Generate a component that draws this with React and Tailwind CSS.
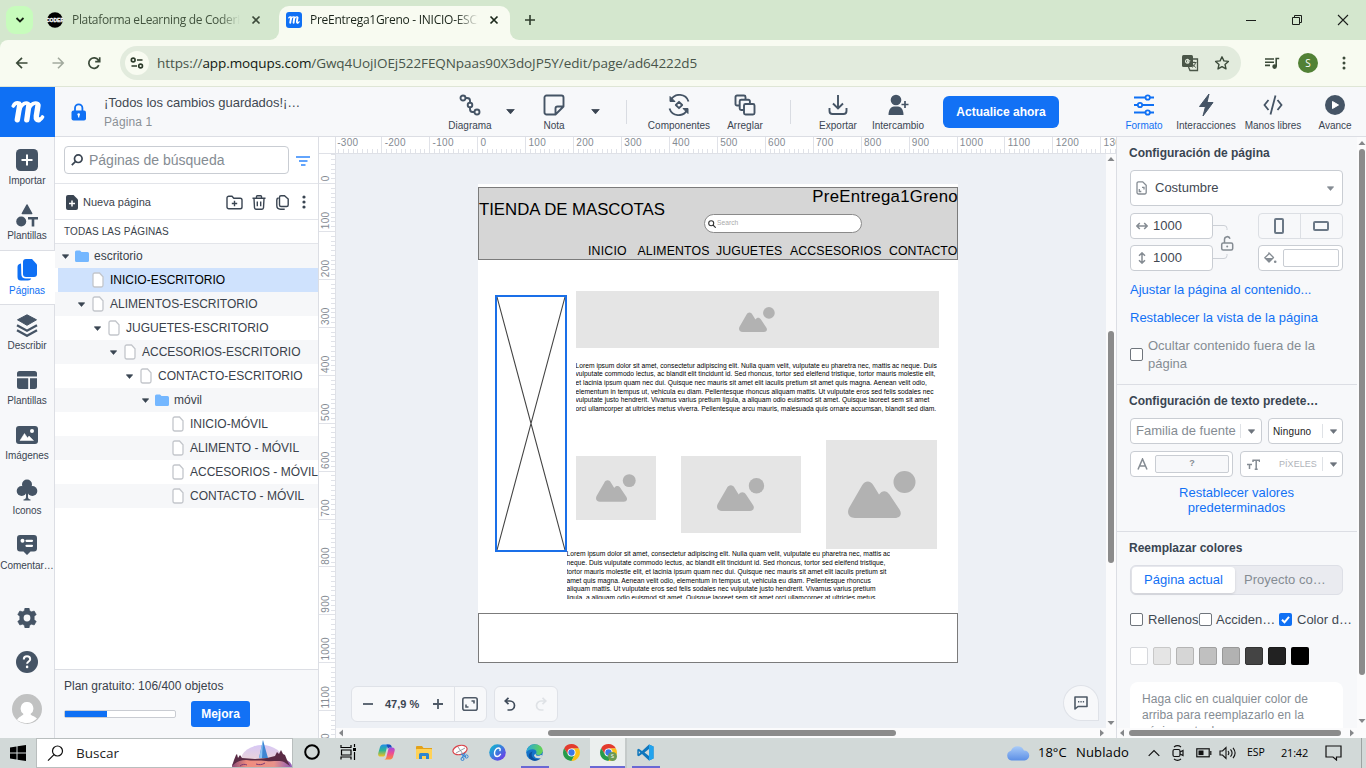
import React from "react";

const INK = "#455465";

function Svg({ w = 24, h = 24, vb, className = "", children, ...rest }) {
  return (
    <svg
      width={w}
      height={h}
      viewBox={vb || `0 0 ${w} ${h}`}
      fill="none"
      className={`block shrink-0 ${className}`}
      {...rest}
    >
      {children}
    </svg>
  );
}

/* ---------- Browser chrome ---------- */

function CloseIcon({ color = "#3c4a3a" }) {
  return (
    <Svg w={10} h={10} stroke={color} strokeWidth="1.7">
      <path d="M1.5 1.5l7 7M8.5 1.5l-7 7" />
    </Svg>
  );
}

function MGlyph({ size, stroke = "#fff" }) {
  return (
    <Svg w={size} h={size} vb="0 0 34 26" stroke={stroke} strokeLinecap="round" strokeLinejoin="round">
      <path strokeWidth="5.400" d="M8.700 6.500L6.300 20.800M17.800 6.500L15.800 20.800M27 6.500L25.300 17C25 20 26 21 27.500 20.800" />
      <path strokeWidth="3.600" d="M2.300 7C3.500 4.500 6 3.500 8.500 4.200M8.500 10.500C11 4.500 15 2.800 17.500 4.800M17.500 10.500C20 4.500 24.300 2.800 27 4.800M27 21C29 21 30.500 20 31.500 18" />
    </Svg>
  );
}

function TabBar() {
  return (
    <div className="flex h-10 shrink-0 bg-[#d4e7ce] font-['Open_Sans','Noto_Sans',sans-serif] text-[12px]">
      <div className="ml-[6px] mt-[6px] flex h-7 w-[27px] items-center justify-center rounded-[9px] bg-[#c7fcbc]">
        <Svg w={10} h={8} stroke="#152213" strokeWidth="1.8">
          <path d="M1.500 2l3.500 3.500L8.500 2" />
        </Svg>
      </div>
      <div className="flex w-[236px] items-center pl-[14px]">
        <Svg w={16} h={16}>
          <circle cx="8" cy="8" r="7.800" fill="#000" />
          <text x="8" y="10" textAnchor="middle" fontSize="5" fontWeight="700" fill="#fff" stroke="#fff" strokeWidth=".3" fontFamily="Liberation Sans">CODER</text>
        </Svg>
        <div className="ml-[9px] w-[168px] overflow-hidden whitespace-nowrap tracking-[-0.330px] text-[#43543f] [mask-image:linear-gradient(to_right,black_148px,transparent_168px)]">
          Plataforma eLearning de CoderHouse
        </div>
        <div className="ml-[11px]"><CloseIcon /></div>
      </div>
      <div className="flex w-[10px] items-end bg-[#f8fbf1]"><div className="h-10 w-[10px] rounded-br-[9px] bg-[#d4e7ce]" /></div>
      <div className="flex bg-[#d4e7ce]">
        <div className="mt-[6px] flex w-[231px] items-center rounded-t-[10px] bg-[#f8fbf1] pb-[6px] pl-[7px]">
          <div className="flex h-4 w-4 items-center justify-center rounded-[3px] bg-[#0f70f4]"><MGlyph size={12} /></div>
          <div className="ml-[8px] w-[168px] overflow-hidden whitespace-nowrap tracking-[-0.270px] text-[#1a241a] [mask-image:linear-gradient(to_right,black_145px,transparent_169px)]">
            PreEntrega1Greno - INICIO-ESCRITORIO
          </div>
          <div className="ml-[11px]"><CloseIcon color="#1c281b" /></div>
        </div>
      </div>
      <div className="w-[10px] bg-[#f8fbf1]"><div className="h-10 w-[10px] rounded-bl-[9px] bg-[#d4e7ce]" /></div>
      <div className="flex flex-1 items-center">
        <Svg w={12} h={12} className="ml-[4px]" stroke="#2f3d2d" strokeWidth="1.6"><path d="M6 1v10M1 6h10" /></Svg>
        <div className="flex-1" />
        <Svg w={12} h={12} className="mr-[34px]" stroke="#1b1f1b" strokeWidth="1"><path d="M1 6.500h10" /></Svg>
        <Svg w={12} h={12} className="mr-[34px]" stroke="#1b1f1b" strokeWidth="1"><path d="M1.500 3.500h7v7h-7zM3.500 3.500v-2h7v7h-2" /></Svg>
        <Svg w={12} h={12} className="mr-[17px]" stroke="#1b1f1b" strokeWidth="1.100"><path d="M1 1l10 10M11 1L1 11" /></Svg>
      </div>
    </div>
  );
}

function AddressBar() {
  return (
    <div className="bg-[#d4e7ce]">
      <div className="flex h-[47px] shrink-0 items-center rounded-tl-[8px] border-b border-[#dfe6d6] bg-[#f8fbf1] font-['Open_Sans','Noto_Sans',sans-serif]">
        <Svg w={14} h={14} className="ml-[15px]" stroke="#3b4a39" strokeWidth="1.700"><path d="M12.500 7H2M7 1.800L1.800 7 7 12.200" /></Svg>
        <Svg w={14} h={14} className="ml-[22px]" stroke="#a2aa9e" strokeWidth="1.600"><path d="M1.500 7H12M7 1.800L12.200 7 7 12.200" /></Svg>
        <Svg w={14} h={14} className="ml-[22px]" stroke="#3b4a39" strokeWidth="1.700"><path d="M11.800 9.200A5.200 5.200 0 1 1 11.400 4.300L12.600 5.500M12.700 1.200v4.500H8.200" /></Svg>
        <div className="ml-[19px] flex h-[34px] w-[1121px] items-center rounded-full bg-[#e2ebdd]">
          <div className="ml-[5px] flex h-6 w-6 items-center justify-center rounded-full bg-[#f8fbf1]">
            <Svg w={14} h={12} stroke="#2b3a29" strokeWidth="1.600"><circle cx="3.200" cy="3" r="1.900" /><path d="M7 3h5.500M1.500 9h5.500" /><circle cx="10.600" cy="9" r="1.900" /></Svg>
          </div>
          <div className="ml-[8px] w-[560px] whitespace-nowrap text-[13.500px] tracking-[-0.080px] text-[#48554a]">
            https://<span className="text-[#111811]">app.moqups.com</span>/Gwq4UojIOEj522FEQNpaas90X3doJP5Y/edit/page/ad64222d5
          </div>
          <div className="flex-1" />
          <Svg w={18} h={18} className="mr-[15px]">
            <rect x="1" y="1" width="11" height="12" rx="1.500" fill="#4a5648" />
            <path d="M9.300 6.700H6.500v1.300h1.500c-.2.800-.8 1.200-1.500 1.200a1.900 1.900 0 1 1 1.200-3.300" stroke="#e2ebdd" strokeWidth="1.100" />
            <path d="M11 5h5.500v11.500H9L7.500 13" stroke="#4a5648" strokeWidth="1.300" />
            <path d="M10.500 8.500h5M13 7.500v1M14.500 8.500c-.4 2.200-1.700 3.800-3.300 4.800M11.500 9.800c.6 1.500 1.800 2.600 3.300 3.700" stroke="#4a5648" strokeWidth="1" />
          </Svg>
          <Svg w={16} h={16} className="mr-[11px]" stroke="#3b4a39" strokeWidth="1.400" strokeLinejoin="round"><path d="M8 1.800l1.900 4.100 4.500.5-3.400 3 1 4.500L8 11.600l-4 2.300 1-4.500-3.400-3 4.500-.5z" /></Svg>
        </div>
        <Svg w={16} h={14} className="ml-[23px]" stroke="#3b4a39" strokeWidth="1.600"><path d="M1 3h9M1 6.200h9M1 9.400h5M12.200 10.500V2.500h3" /><circle cx="10.600" cy="10.600" r="1.500" fill="#3b4a39" /></Svg>
        <div className="ml-[18px] flex h-5 w-5 items-center justify-center rounded-full bg-[#528136] text-[10px] text-white">S</div>
        <Svg w={4} h={16} className="ml-[24px]"><circle cx="2" cy="3" r="1.500" fill="#3b4a39" /><circle cx="2" cy="8" r="1.500" fill="#3b4a39" /><circle cx="2" cy="13" r="1.500" fill="#3b4a39" /></Svg>
      </div>
    </div>
  );
}

/* ---------- Application header ---------- */

function Tool({ label, className, active, children }) {
  return (
    <div className={`flex flex-col items-center pt-[6px] ${className} ${active ? "text-[#0f70f4]" : "text-[#3a4552]"}`}>
      <div className="flex h-[24px] items-center justify-center">{children}</div>
      <div className="mt-[3px] whitespace-nowrap text-[10px] leading-[12px]">{label}</div>
    </div>
  );
}

function Caret({ w = 9, h = 5, color = "#3a4552", className = "" }) {
  return (
    <Svg w={w} h={h} vb="0 0 10 6" className={className}><path d="M0.500 0.500h9L5 5.800z" fill={color} stroke={color} strokeLinejoin="round" /></Svg>
  );
}

function Header() {
  return (
    <header className="flex h-[50px] shrink-0 border-b border-[#dcdee4] bg-[#f7f8fa]">
      <div className="flex h-[50px] w-[55px] shrink-0 items-center justify-center bg-[#0f70f4]"><MGlyph size={34} /></div>
      <div className="flex w-[385px] shrink-0 items-center">
        <Svg w={16} h={18} className="ml-[16px]">
          <rect x="0.500" y="7.500" width="14.500" height="10" rx="2" fill="#0f70f4" />
          <path d="M4 8V5a3.700 3.700 0 0 1 7.400 0v3" stroke="#0f70f4" strokeWidth="1.800" />
          <circle cx="7.700" cy="11.500" r="1.300" fill="#fff" /><path d="M7.700 11.500v3" stroke="#fff" strokeWidth="1.300" />
        </Svg>
        <div className="ml-[17px] pt-[1px]">
          <div className="text-[13px] leading-[16px] tracking-[-0.030px] text-[#3f4852]">¡Todos los cambios guardados!¡…</div>
          <div className="mt-[3px] text-[12px] leading-[16px] tracking-[0.100px] text-[#8a9096]">Página 1</div>
        </div>
      </div>
      <Tool label="Diagrama" className="w-[60px]">
        <Svg w={22} h={22} stroke={INK} strokeWidth="1.900"><circle cx="4" cy="4" r="2.500" /><circle cx="11" cy="11" r="2.300" /><circle cx="18" cy="18" r="2.500" /><path d="M6.500 4H8c2 0 3 1 3 2.500v2.200M11 13.300V15c0 2 1 3 2.500 3h2" /></Svg>
      </Tool>
      <div className="flex w-[20px] items-center justify-center"><Caret /></div>
      <Tool label="Nota" className="w-[68px]">
        <Svg w={22} h={22} stroke={INK} strokeWidth="1.900" strokeLinejoin="round"><path d="M12.500 20.500H3.500a2 2 0 0 1-2-2v-15a2 2 0 0 1 2-2h15a2 2 0 0 1 2 2v9zM12.500 20.500v-6a2 2 0 0 1 2-2h6" /></Svg>
      </Tool>
      <div className="flex w-[15px] items-center justify-center"><Caret /></div>
      <div className="ml-[23px] mt-[13px] h-6 w-px bg-[#d9dce2]" />
      <Tool label="Componentes" className="ml-[12px] w-[80px]">
        <Svg w={24} h={22} stroke={INK} strokeWidth="1.800"><path d="M2.500 14.500A9.500 9.500 0 0 0 20 16M21.500 7.500A9.500 9.500 0 0 0 4 6" /><path d="M3 2.500v5h5zM21 19.500v-5h-5z" fill={INK} strokeWidth="1" strokeLinejoin="round" /><path d="M12 7.800l3.200 3.200-3.200 3.200L8.800 11z" strokeLinejoin="round" /></Svg>
      </Tool>
      <Tool label="Arreglar" className="w-[52px]">
        <Svg w={22} h={22} stroke={INK} strokeWidth="1.900" strokeLinejoin="round"><rect x="10" y="10" width="10.500" height="10.500" rx="1.500" /><path d="M9.500 16H7.200a1.500 1.500 0 0 1-1.500-1.500V7.300a1.500 1.500 0 0 1 1.500-1.500h7.200a1.500 1.500 0 0 1 1.500 1.500V9.500M5.500 11.500H3A1.500 1.500 0 0 1 1.500 10V3A1.500 1.500 0 0 1 3 1.500h7A1.500 1.500 0 0 1 11.500 3V5.500" /></Svg>
      </Tool>
      <div className="ml-[19px] mt-[13px] h-6 w-px bg-[#d9dce2]" />
      <Tool label="Exportar" className="ml-[17px] w-[60px]">
        <Svg w={20} h={22} stroke={INK} strokeWidth="1.900"><path d="M10 1v13M5 9.500l5 5 5-5M1.500 14v3a3 3 0 0 0 3 3h11a3 3 0 0 0 3-3v-3" /></Svg>
      </Tool>
      <Tool label="Intercambio" className="w-[60px]">
        <Svg w={22} h={22}><circle cx="9" cy="6" r="5.300" fill={INK} /><path d="M1.500 21c0-4.500 2-8.500 5.500-8.500h4c3.500 0 5.500 4 5.500 8.500z" fill={INK} /><path d="M18 7v7M14.500 10.500h7" stroke={INK} strokeWidth="1.700" /></Svg>
      </Tool>
      <div className="ml-[15px] mt-[9px] flex h-8 w-[116px] items-center justify-center rounded-[6px] bg-[#1271f5] text-[12px] font-bold text-white">Actualice ahora</div>
      <Tool label="Formato" className="ml-[59px] w-[52px]" active>
        <Svg w={20} h={22} stroke="#0f70f4" strokeWidth="1.800"><path d="M0 3.500h11.500M16 3.500h4M0 11h3.500M8.500 11H20M0 18.500h11.500M16 18.500h4" /><circle cx="13.700" cy="3.500" r="2.200" /><circle cx="6" cy="11" r="2.200" /><circle cx="13.700" cy="18.500" r="2.200" /></Svg>
      </Tool>
      <Tool label="Interacciones" className="w-[72px]">
        <Svg w={16} h={24}><path d="M11 1L1.500 13.500H7.500L5 23l10-13.500H9z" fill={INK} stroke={INK} strokeLinejoin="round" /></Svg>
      </Tool>
      <Tool label="Manos libres" className="w-[62px]">
        <Svg w={22} h={22} stroke={INK} strokeWidth="1.800"><path d="M6.500 6L2.500 11l4 5M15.500 6l4 5-4 5M13.500 1.500l-5 19" /></Svg>
      </Tool>
      <Tool label="Avance" className="w-[62px]">
        <Svg w={20} h={22}><circle cx="10" cy="11" r="10" fill={INK} /><path d="M7.500 7.500v7l6-3.500z" fill="#fff" stroke="#fff" strokeLinejoin="round" /></Svg>
      </Tool>
    </header>
  );
}

/* ---------- Left rail ---------- */

const railIcons = {
  importar: (
    <Svg w={22} h={22}><rect width="22" height="22" rx="4.500" fill={INK} /><path d="M11 5.500v11M5.500 11h11" stroke="#fff" strokeWidth="2" /></Svg>
  ),
  formas: (
    <Svg w={22} h={23} fill={INK}><path d="M11 1l4.700 8.500H6.300z" fill={INK} stroke={INK} strokeWidth="1.500" strokeLinejoin="round" /><circle cx="5.200" cy="17.500" r="5" fill={INK} /><path d="M12 14.300h10M17 14.300v8.200" stroke={INK} strokeWidth="2.600" /></Svg>
  ),
  paginas: (
    <Svg w={20} h={22}><path d="M9 0h6l5 5.500V15a3 3 0 0 1-3 3H9a3 3 0 0 1-3-3V3a3 3 0 0 1 3-3z" fill="#0f70f4" /><path d="M4 4.500C1.500 5 0.500 6 0.500 8v10a3.500 3.500 0 0 0 3.500 3.500h7c1.800 0 2.800-.8 3.200-2H9c-3 0-4.700-1.500-4.700-4.500z" fill="#0f70f4" /></Svg>
  ),
  describir: (
    <Svg w={22} h={23}><path d="M11 .8l9.500 5L11 11.300 1.500 5.800z" fill={INK} stroke={INK} strokeLinejoin="round" /><path d="M1 11.300l10 5.500 10-5.500M1 16.300l10 5.500 10-5.500" stroke={INK} strokeWidth="2.300" /></Svg>
  ),
  plantillas: (
    <Svg w={20} h={18} fill={INK}><path d="M0 5.500V2.500A2.500 2.500 0 0 1 2.500 0h15A2.500 2.500 0 0 1 20 2.500v3zM0 7.200h11.200V18H2.500A2.500 2.500 0 0 1 0 15.500zM13 7.200h7v8.300a2.500 2.500 0 0 1-2.500 2.500H13z" fill={INK} /></Svg>
  ),
  imagenes: (
    <Svg w={22} h={18}><rect width="22" height="18" rx="3" fill={INK} /><path d="M4 14.500l4.500-7 3 4.500 1.500-2 4.500 4.500z" fill="#fff" stroke="#fff" strokeWidth=".5" strokeLinejoin="round" /><circle cx="16" cy="5" r="2" fill="#fff" /></Svg>
  ),
  iconos: (
    <Svg w={22} h={22} fill={INK}><circle cx="11" cy="5.500" r="5" fill={INK} /><circle cx="5.700" cy="12" r="5" fill={INK} /><circle cx="16.300" cy="12" r="5" fill={INK} /><path d="M8 7h6v6h-2v5c0 1.800 1 2.200 2.500 2.500v1h-7v-1c1.500-.3 2.500-.7 2.500-2.500v-5H8z" fill={INK} /></Svg>
  ),
  comentarios: (
    <Svg w={20} h={20}><path d="M3 0h14a3 3 0 0 1 3 3v10.500a3 3 0 0 1-3 3h-3.500L10 20l-3.500-3.500H3a3 3 0 0 1-3-3V3a3 3 0 0 1 3-3z" fill={INK} /><circle cx="5.500" cy="5.800" r="2" fill="#fff" /><path d="M9.500 5.800h5.500M9.500 10.800h5.500" stroke="#fff" strokeWidth="2.200" strokeLinecap="round" /></Svg>
  ),
};

const railItems = [
  ["importar", "Importar"],
  ["formas", "Plantillas"],
  ["paginas", "Páginas"],
  ["describir", "Describir"],
  ["plantillas", "Plantillas"],
  ["imagenes", "Imágenes"],
  ["iconos", "Iconos"],
  ["comentarios", "Comentar…"],
];

function Rail() {
  return (
    <nav className="flex w-[55px] shrink-0 flex-col border-r border-[#dcdee4] bg-[#f7f8fa] pt-[3px] text-[10px]">
      {railItems.map(([key, label]) => (
        <div
          key={key}
          className={`flex h-[55px] shrink-0 flex-col items-center pt-[8px] ${
            key === "paginas" ? "-mr-px border-y border-[#dcdee4] bg-white pr-px text-[#0f70f4]" : "text-[#3a4552]"
          }`}
        >
          <div className={`flex h-6 items-center ${key === "paginas" ? "-mt-px" : ""}`}>{railIcons[key]}</div>
          <div className="mt-[3px] whitespace-nowrap leading-[12px] tracking-[-0.050px]">{label}</div>
        </div>
      ))}
      <div className="flex flex-col items-center">
        <Svg w={20} h={20} className="mt-[28px]">
          <path d="M8 0h4l.7 2.800 1.700 1 2.800-.8 2 3.400L17.200 8.500v3l2 2.100-2 3.400-2.800-.8-1.700 1L12 20H8l-.7-2.800-1.700-1-2.800.8-2-3.400 2-2.100v-3L.8 6.400l2-3.400 2.800.8 1.700-1z" fill={INK} stroke={INK} strokeWidth=".6" strokeLinejoin="round" />
          <circle cx="10" cy="10" r="3.400" fill="#f7f8fa" />
        </Svg>
        <Svg w={22} h={22} className="mt-[23px]">
          <circle cx="11" cy="11" r="11" fill={INK} />
          <path d="M7.800 8.500c0-2 1.300-3.200 3.200-3.200s3.200 1.200 3.200 2.900c0 2.200-3.100 2.300-3.100 4.600" stroke="#fff" strokeWidth="2" /><circle cx="11.100" cy="15.900" r="1.300" fill="#fff" />
        </Svg>
        <Svg w={30} h={30} className="mt-[21px]">
          <circle cx="15" cy="15" r="15" fill="#c1c2c2" />
          <path d="M15 8a6 6.500 0 0 1 3.500 12c1 2 4 2 6.500 4.500A15 15 0 0 1 5 26c2-3.500 5.500-4 6.500-6A6 6.500 0 0 1 15 8z" fill="#fff" />
        </Svg>
      </div>
    </nav>
  );
}

/* ---------- Pages panel ---------- */

function FolderIcon() {
  return (
    <Svg w={14} h={12}><path d="M0 2A1.500 1.500 0 0 1 1.500.5H5l1.500 1.500h6A1.500 1.500 0 0 1 14 3.500v7a1.500 1.500 0 0 1-1.500 1.500h-11A1.500 1.500 0 0 1 0 10.500z" fill="#74b7ff" /></Svg>
  );
}

function PageIcon() {
  return (
    <Svg w={12} h={16}><path d="M2.700 1h4.800L11 4.800v8.500A1.700 1.700 0 0 1 9.300 15H2.700A1.700 1.700 0 0 1 1 13.300V2.700A1.700 1.700 0 0 1 2.700 1z" fill="#fff" stroke="#c3c6cb" strokeWidth="1.300" /></Svg>
  );
}

const tree = [
  ["folder", "escritorio", "pl-[7px]", true],
  ["page", "INICIO-ESCRITORIO", "pl-[20px]", false],
  ["page", "ALIMENTOS-ESCRITORIO", "pl-[23px]", true],
  ["page", "JUGUETES-ESCRITORIO", "pl-[39px]", true],
  ["page", "ACCESORIOS-ESCRITORIO", "pl-[55px]", true],
  ["page", "CONTACTO-ESCRITORIO", "pl-[71px]", true],
  ["folder", "móvil", "pl-[87px]", true],
  ["page", "INICIO-MÓVIL", "pl-[103px]", false],
  ["page", "ALIMENTO - MÓVIL", "pl-[103px]", false],
  ["page", "ACCESORIOS - MÓVIL", "pl-[103px]", false],
  ["page", "CONTACTO - MÓVIL", "pl-[103px]", false],
];

function PagesPanel() {
  return (
    <section className="flex w-[264px] shrink-0 flex-col overflow-hidden border-r border-[#dcdee4] bg-white text-[#3a424b]">
      <div className="flex h-[47px] shrink-0 items-center border-b border-[#e3e5ea] pl-[9px]">
        <div className="flex h-[28px] w-[225px] items-center rounded-[4px] border border-[#c9cdd3] bg-white pl-[6px]">
          <Svg w={12} h={12} stroke="#3a4552" strokeWidth="1.700"><circle cx="7.300" cy="4.700" r="3.800" /><path d="M4.600 7.400L.8 11.200" /></Svg>
          <span className="ml-[6px] text-[14px] text-[#858c93]">Páginas de búsqueda</span>
        </div>
        <Svg w={14} h={10} className="ml-[7px] mt-[2px]" stroke="#2f86fb" strokeWidth="1.500"><path d="M0 1h14M3 5h8.500M5 9h4.500" /></Svg>
      </div>
      <div className="flex h-[36px] shrink-0 items-center border-b border-[#e3e5ea] pl-[11px] pt-[1px] text-[11px]">
        <Svg w={12} h={15}><path d="M2 0h5.500L12 4.500V13a2 2 0 0 1-2 2H2a2 2 0 0 1-2-2V2a2 2 0 0 1 2-2z" fill="#3a4552" /><path d="M6 5.500v6M3 8.500h6" stroke="#fff" strokeWidth="1.500" /></Svg>
        <span className="ml-[5px] w-[142px]">Nueva página</span>
        <Svg w={17} h={15} className="ml-[1px]" stroke="#3a4552" strokeWidth="1.400"><path d="M1 3a1.800 1.800 0 0 1 1.800-1.800H6l1.800 2h6.400A1.800 1.800 0 0 1 16 5v7a1.800 1.800 0 0 1-1.800 1.800H2.800A1.800 1.800 0 0 1 1 12zM8.500 5.800v5.400M5.800 8.500h5.400" /></Svg>
        <Svg w={14} h={15} className="ml-[9px]" stroke="#3a4552" strokeWidth="1.400"><path d="M.5 3.200h13M4.500 3V1.500A.8.800 0 0 1 5.300.7h3.400a.8.800 0 0 1 .8.800V3M2 3.500l.5 9.300A1.500 1.500 0 0 0 4 14.200h6a1.500 1.500 0 0 0 1.500-1.400L12 3.500M5.300 6.500v4.700M8.700 6.500v4.700" /></Svg>
        <Svg w={13} h={15} className="ml-[10px]" stroke="#3a4552" strokeWidth="1.400"><path d="M5 .7h3.500L12.200 4v6a1.500 1.500 0 0 1-1.500 1.500H5A1.500 1.500 0 0 1 3.500 10V2.200A1.500 1.500 0 0 1 5 .7zM2.500 3C1.200 3.200.8 4 .8 5v5.500c0 2.500 1.200 3.700 3.700 3.700h4.200" /></Svg>
        <Svg w={4} h={14} className="ml-[13px]"><circle cx="2" cy="2" r="1.600" fill="#3a4552" /><circle cx="2" cy="7" r="1.600" fill="#3a4552" /><circle cx="2" cy="12" r="1.600" fill="#3a4552" /></Svg>
      </div>
      <div className="flex h-[24px] shrink-0 items-center border-b border-[#e3e5ea] pl-[9px] text-[10px] tracking-[0.100px]">TODAS LAS PÁGINAS</div>
      <div className="flex flex-1 flex-col text-[12px]">
        {tree.map(([kind, name, pad, open], i) => (
          <div
            key={name}
            className={`flex h-6 shrink-0 items-center whitespace-nowrap ${pad} ${
              i === 1 ? "ml-[3px] bg-[#cfe2fd] text-black" : i % 2 === 0 ? "bg-[#f6f7f9]" : "bg-white"
            }`}
          >
            <span className="flex w-[13px]">{open && <Caret w={7} h={5} />}</span>
            <span className={`flex items-center ${kind === "folder" ? "w-[19px]" : "w-[19px] pl-[1px]"}`}>
              {kind === "folder" ? <FolderIcon /> : <PageIcon />}
            </span>
            {name}
          </div>
        ))}
      </div>
      <div className="flex h-[69px] shrink-0 flex-col border-t border-[#dcdee4] bg-[#f7f8fa] pl-[9px] pt-[8px]">
        <div className="text-[12px] leading-[16px]">Plan gratuito: 106/400 objetos</div>
        <div className="mt-[7px] flex items-center">
          <div className="flex h-[8px] w-[112px] rounded-[2px] border border-[#c9ccd2] bg-white"><div className="w-[42px] bg-[#0f70f4]" /></div>
          <div className="ml-[15px] flex h-[26px] w-[59px] items-center justify-center rounded-[3px] bg-[#1271f5] text-[12px] font-bold text-white">Mejora</div>
        </div>
      </div>
    </section>
  );
}

/* ---------- Rulers and canvas ---------- */

const STEP = 47.93;

function HorizontalRuler() {
  const ticks = [];
  const labels = [];
  for (let i = -29; i <= 133; i++) {
    const x = Math.round(141.2 + (i * STEP) / 10) + 0.5;
    ticks.push(<path key={i} d={`M${x} ${i % 10 === 0 ? 0 : 12}V16`} />);
    if (i % 10 === 0) labels.push([141 + (i * STEP) / 10 + 3.500, i * 10]);
  }
  labels.unshift([1.200, -300]);
  return (
    <svg width="780" height="17" className="block shrink-0 border-b border-[#dfe1e7] bg-white">
      <g stroke="#e0e2e8" strokeWidth="1">{ticks}</g>
      <g fill="#858b93" fontSize="10" letterSpacing=".3" fontFamily="Liberation Sans, sans-serif">
        {labels.map(([x, v]) => <text key={v} x={x} y="9">{v}</text>)}
      </g>
    </svg>
  );
}

function VerticalRuler() {
  const ticks = [];
  const labels = [];
  for (let i = -6; i <= 116; i++) {
    const y = Math.round(29 + (i * STEP) / 10) + 0.5;
    ticks.push(<path key={i} d={`M${i % 10 === 0 ? 0 : 12} ${y}H16`} />);
  }
  for (let i = 0; i <= 12; i++) labels.push([29 + i * STEP - 1.700, i * 100]);
  return (
    <svg width="17" height="584" className="block shrink-0 border-r border-[#dfe1e7] bg-white">
      <g stroke="#e0e2e8" strokeWidth="1">{ticks}</g>
      <g fill="#858b93" fontSize="10" letterSpacing=".3" fontFamily="Liberation Sans, sans-serif">
        {labels.map(([y, v]) => <text key={v} transform={`translate(9.800 ${y}) rotate(-90)`}>{v}</text>)}
      </g>
    </svg>
  );
}

function Placeholder({ box, icon }) {
  return (
    <div className={`absolute flex bg-[#e5e5e5] ${box}`}>
      <svg viewBox="0 0 68 47" className={`block ${icon}`} fill="#b2b2b2">
        <path d="M1 37L14 14.500C17 9 22.500 9 25.500 14.500L31 23.500C34 19 38.500 19 41.500 23.500L51.500 38.500C54.500 43 52 47 47 47H7C1 47-1.500 42 1 37z" />
        <circle cx="56.500" cy="11" r="11" />
      </svg>
    </div>
  );
}

const loremTop = [
  "Lorem ipsum dolor sit amet, consectetur adipiscing elit. Nulla quam velit, vulputate eu pharetra nec, mattis ac neque. Duis",
  "vulputate commodo lectus, ac blandit elit tincidunt id. Sed rhoncus, tortor sed eleifend tristique, tortor mauris molestie elit,",
  "et lacinia ipsum quam nec dui. Quisque nec mauris sit amet elit iaculis pretium sit amet quis magna. Aenean velit odio,",
  "elementum in tempus ut, vehicula eu diam. Pellentesque rhoncus aliquam mattis. Ut vulputate eros sed felis sodales nec",
  "vulputate justo hendrerit. Vivamus varius pretium ligula, a aliquam odio euismod sit amet. Quisque laoreet sem sit amet",
  "orci ullamcorper at ultricies metus viverra. Pellentesque arcu mauris, malesuada quis ornare accumsan, blandit sed diam.",
];

const loremBottom = [
  "Lorem ipsum dolor sit amet, consectetur adipiscing elit. Nulla quam velit, vulputate eu pharetra nec, mattis ac",
  "neque. Duis vulputate commodo lectus, ac blandit elit tincidunt id. Sed rhoncus, tortor sed eleifend tristique,",
  "tortor mauris molestie elit, et lacinia ipsum quam nec dui. Quisque nec mauris sit amet elit iaculis pretium sit",
  "amet quis magna. Aenean velit odio, elementum in tempus ut, vehicula eu diam. Pellentesque rhoncus",
  "aliquam mattis. Ut vulputate eros sed felis sodales nec vulputate justo hendrerit. Vivamus varius pretium",
  "ligula, a aliquam odio euismod sit amet. Quisque laoreet sem sit amet orci ullamcorper at ultricies metus",
];

function Lorem({ lines, className }) {
  return (
    <div className={`absolute overflow-hidden whitespace-nowrap text-[6.700px] tracking-[0.013px] text-black ${className}`}>
      {lines.map((l) => <div key={l}>{l}</div>)}
    </div>
  );
}

function Artboard() {
  return (
    <div className="absolute left-[142px] top-[30px] h-[479px] w-[480px] bg-white text-black">
      <div className="absolute left-0 top-[3px] h-[73px] w-[480px] border border-[#7b7b7b] bg-[#d6d6d6]" />
      <div className="absolute left-[1px] top-[16px] whitespace-nowrap text-[16.800px] leading-[20px] tracking-[-0.020px]">TIENDA DE MASCOTAS</div>
      <div className="absolute right-0 top-[3px] whitespace-nowrap text-[16.800px] leading-[20px] tracking-[0.300px]">PreEntrega1Greno</div>
      <div className="absolute left-[226px] top-[30px] flex h-[19px] w-[158px] items-center rounded-full border border-[#8a8a8a] bg-white pl-[3px]">
        <Svg w={8} h={8} stroke="#333" strokeWidth="1.100"><circle cx="3.200" cy="3.200" r="2.500" /><path d="M5 5l2.700 2.700" /></Svg>
        <span className="ml-[1px] text-[6.700px] text-[#aaa]">Search</span>
      </div>
      <div className="absolute left-[110px] top-[59px] whitespace-nowrap text-[12.300px] leading-[16px] tracking-[0.200px]">INICIO</div>
      <div className="absolute left-[159.500px] top-[59px] whitespace-nowrap text-[12.300px] leading-[16px] tracking-[0.130px]">ALIMENTOS</div>
      <div className="absolute left-[238px] top-[59px] whitespace-nowrap text-[12.300px] leading-[16px] tracking-[0.100px]">JUGUETES</div>
      <div className="absolute left-[312px] top-[59px] whitespace-nowrap text-[12.300px] leading-[16px] tracking-[0.130px]">ACCSESORIOS</div>
      <div className="absolute left-[411px] top-[59px] whitespace-nowrap text-[12.300px] leading-[16px] tracking-[0.060px]">CONTACTO</div>

      <svg width="72" height="257" className="absolute left-[17px] top-[111px] border-2 border-[#1a6fe8]" viewBox="0 0 68 253" fill="none" stroke="#444" strokeWidth="1.100">
        <path d="M0 0L68 253M68 0L0 253" />
      </svg>

      <Placeholder box="left-[98px] top-[107px] h-[57px] w-[363px]" icon="ml-[163px] mt-[15.500px] h-[25px] w-[36px]" />
      <Lorem lines={loremTop} className="left-[97.500px] top-[177.500px] leading-[8.700px]" />
      <Placeholder box="left-[98px] top-[272px] h-[64px] w-[79.500px]" icon="ml-[20px] mt-[18px] h-[28px] w-[40px]" />
      <Placeholder box="left-[203px] top-[272px] h-[76.500px] w-[120px]" icon="ml-[36px] mt-[22px] h-[33px] w-[47.500px]" />
      <Placeholder box="left-[348px] top-[256px] h-[109px] w-[111px]" icon="ml-[21.500px] mt-[31px] h-[47px] w-[68px]" />
      <Lorem lines={loremBottom} className="left-[88.500px] top-[366px] h-[49px] leading-[8.850px]" />
      <div className="absolute left-0 top-[429px] h-[50px] w-[480px] border border-[#7b7b7b] bg-white" />
    </div>
  );
}

function Arrow({ dir }) {
  const d = { up: "M0.500 5L4 1l3.500 4z", down: "M0.500 1L4 5l3.500-4z", left: "M5 0.500L1 4l4 3.500z", right: "M1 0.500L5 4 1 7.500z" }[dir];
  const flat = dir === "up" || dir === "down";
  return <Svg w={flat ? 8 : 6} h={flat ? 6 : 8}><path d={d} fill="#85878a" /></Svg>;
}

function Workspace() {
  return (
    <main className="flex w-[797px] shrink-0 flex-col overflow-hidden">
      <div className="flex shrink-0"><div className="h-[17px] w-[17px] border-b border-r border-[#dfe1e7] bg-white" /><HorizontalRuler /></div>
      <div className="flex min-h-0 flex-1">
        <VerticalRuler />
        <div className="flex flex-1 flex-col">
          <div className="flex min-h-0 flex-1">
            <div className="relative flex-1 overflow-hidden bg-[#edf0f5]">
              <Artboard />
              <div className="absolute left-[15px] top-[532px] flex h-9 gap-[7px]">
                <div className="flex w-[136px] items-center rounded-[6px] border border-[#dfe2e8] bg-[#f7f8fa]">
                  <Svg w={10} h={2} className="ml-[11px]"><path d="M0 1h10" stroke="#4f5a67" strokeWidth="1.800" /></Svg>
                  <span className="ml-[12px] w-[36px] whitespace-nowrap text-[11px] font-bold text-[#3a4552]">47,9 %</span>
                  <Svg w={10} h={10} className="ml-[12px]"><path d="M0 5h10M5 0v10" stroke="#4f5a67" strokeWidth="1.800" /></Svg>
                  <div className="ml-[11px] h-full w-px bg-[#dfe2e8]" />
                  <Svg w={16} h={14} className="ml-[7px]" stroke="#4f5a67" strokeWidth="1.600"><rect x=".8" y=".8" width="14.400" height="12.400" rx="2" /><path d="M9.500 4h2.500v2.500M4 7.500V10h2.500" /></Svg>
                </div>
                <div className="flex w-[64px] items-center justify-between rounded-[6px] border border-[#dfe2e8] bg-[#f7f8fa] pl-[9px] pr-[10px]">
                  <Svg w={12} h={14} stroke="#3f4b5a" strokeWidth="1.700"><path d="M4.500 .8L1.200 4l3.300 3.200M1.500 4H6a4.500 4.500 0 0 1 0 9H3.500" /></Svg>
                  <Svg w={12} h={14} stroke="#dfe2e6" strokeWidth="1.700"><path d="M7.500 .8L10.800 4 7.500 7.200M10.500 4H6a4.500 4.500 0 0 0 0 9h2.500" /></Svg>
                </div>
              </div>
              <div className="absolute left-[727px] top-[531px] flex h-9 w-9 items-center justify-center rounded-full rounded-br-[4px] border border-[#dfe2e8] bg-[#f7f8fa]">
                <Svg w={14} h={14} stroke="#4f5a67" strokeWidth="1.600" strokeLinejoin="round"><path d="M1 1h12v9.500H4L1 13z" /><path d="M4 5.700h1.300M6.400 5.700h1.300M8.800 5.700h1.300" /></Svg>
              </div>
            </div>
            <div className="flex w-[10px] flex-col items-center bg-[#fbfbfc] pb-[2px] pt-[2px]">
              <Arrow dir="up" />
              <div className="mt-[169px] h-[232px] w-[6px] rounded-full bg-[#8b8b8b]" />
              <div className="flex-1" />
              <Arrow dir="down" />
            </div>
          </div>
          <div className="flex h-[10px] shrink-0 items-center bg-[#fbfbfc] pl-[2px]">
            <Arrow dir="left" />
            <div className="ml-[204px] h-[6px] w-[348px] rounded-full bg-[#8b8b8b]" />
            <div className="flex-1" />
            <div className="mr-[11px]"><Arrow dir="right" /></div>
          </div>
        </div>
      </div>
    </main>
  );
}

/* ---------- Format panel ---------- */

function Check({ on }) {
  return on ? (
    <Svg w={13} h={13}><rect width="13" height="13" rx="2" fill="#0f70f4" /><path d="M3 6.800l2.500 2.500L10 3.800" stroke="#fff" strokeWidth="2" /></Svg>
  ) : (
    <span className="block h-[13px] w-[13px] shrink-0 rounded-[2px] border border-[#6f757c] bg-white" />
  );
}

function Swatches() {
  return (
    <div className="mt-[20px] flex gap-[5px]">
      <span className="h-[18px] w-[18px] rounded-[2px] border border-[#d6d8dc] bg-white" />
      <span className="h-[18px] w-[18px] rounded-[2px] border border-[#c8c8c8] bg-[#e5e5e5]" />
      <span className="h-[18px] w-[18px] rounded-[2px] border border-[#b4b4b4] bg-[#d6d6d6]" />
      <span className="h-[18px] w-[18px] rounded-[2px] border border-[#a0a0a0] bg-[#c0c0c0]" />
      <span className="h-[18px] w-[18px] rounded-[2px] border border-[#989898] bg-[#b2b2b2]" />
      <span className="h-[18px] w-[18px] rounded-[2px] border border-[#333] bg-[#444]" />
      <span className="h-[18px] w-[18px] rounded-[2px] border border-[#1a1a1a] bg-[#222]" />
      <span className="h-[18px] w-[18px] rounded-[2px] bg-black" />
    </div>
  );
}

function FormatPanel() {
  return (
    <aside className="flex w-[250px] shrink-0 border-l border-[#dcdee4] bg-[#f7f8fa] text-[13px] text-[#3f4852]">
      <div className="flex w-[240px] flex-col">
        <div className="flex h-[591px] flex-col overflow-hidden">
          <div className="h-[248px] shrink-0 border-b border-[#dcdee4] pl-[13px]">
            <div className="-ml-px mt-[8px] text-[12px] font-bold leading-[16px] text-[#3a4552]">Configuración de página</div>
            <div className="mt-[9px] flex h-[36px] w-[213px] items-center rounded-[4px] border border-[#c9cdd3] bg-white pl-[5px]">
              <Svg w={11} h={14} stroke="#858c93" strokeWidth="1.300"><path d="M2.500.8h4.200l3.500 3.500v7.200a1.500 1.500 0 0 1-1.500 1.500H2.500A1.500 1.500 0 0 1 1 11.500V2.300A1.500 1.500 0 0 1 2.500.8zM3.300 8v2.500h2M6 6.300h2v2.200" /></Svg>
              <span className="ml-[8px] flex-1 leading-[16px]">Costumbre</span>
              <Caret w={7} h={5} color="#858c93" className="mr-[8px]" />
            </div>
            <div className="mt-[7px] flex">
              <div className="flex flex-col gap-[6px]">
                <div className="flex h-[26px] w-[83px] items-center rounded-[4px] border border-[#c9cdd3] bg-white pl-[5px]">
                  <Svg w={12} h={8} stroke="#858c93" strokeWidth="1.500"><path d="M1 4h10M3.800 1L.9 4l2.900 3M8.200 1l2.900 3-2.900 3" /></Svg>
                  <span className="ml-[5px]">1000</span>
                </div>
                <div className="flex h-[26px] w-[83px] items-center rounded-[4px] border border-[#c9cdd3] bg-white pl-[7px]">
                  <Svg w={8} h={12} stroke="#858c93" strokeWidth="1.500"><path d="M4 1v10M1 3.800L4 .9l3 2.900M1 8.200l3 2.900 3-2.900" /></Svg>
                  <span className="ml-[7px]">1000</span>
                </div>
              </div>
              <Svg w={28} h={58}>
                <path d="M0 12.500h11q3 0 3 3v1.500M0 45.500h11q3 0 3-3v-1.500" stroke="#ccd0d6" />
                <rect x="8.700" y="30" width="11" height="7" rx="1.500" stroke="#858c93" strokeWidth="1.500" /><path d="M11.500 30v-3.500a2.800 2.800 0 0 1 5.500-.8" stroke="#858c93" strokeWidth="1.500" /><circle cx="14.200" cy="33.500" r="1" fill="#858c93" />
              </Svg>
              <div className="ml-[17px] flex flex-col gap-[6px]">
                <div className="flex h-[26px] w-[85px] rounded-[4px] border border-[#dcdfe4]">
                  <div className="flex w-[42px] items-center justify-center border-r border-[#dcdfe4] pr-px"><div className="h-[16px] w-[10px] rounded-[2px] border-2 border-[#6b7886]" /></div>
                  <div className="flex flex-1 items-center justify-center pr-px"><div className="h-[10px] w-[16px] rounded-[2px] border-2 border-[#6b7886]" /></div>
                </div>
                <div className="flex h-[26px] w-[85px] items-center rounded-[4px] border border-[#c9cdd3] bg-white pl-[5px]">
                  <Svg w={13} h={12}><path d="M4.500.5l5 5-4.500 4.500L.8 5.800 5 1.800" stroke="#858c93" strokeWidth="1.300" strokeLinejoin="round" /><path d="M1 6h8.500L5.200 10.300z" fill="#858c93" /><circle cx="11.200" cy="9.800" r="1.300" fill="#858c93" /></Svg>
                  <div className="ml-[6px] h-[18px] w-[56px] rounded-[2px] border border-[#c9cdd3] bg-white" />
                </div>
              </div>
            </div>
            <div className="mt-[10px] leading-[18px] text-[#1271f5]">Ajustar la página al contenido...</div>
            <div className="mt-[10px] leading-[18px] text-[#1271f5]">Restablecer la vista de la página</div>
            <div className="mt-[10px] flex">
              <div className="mt-[11px]"><Check /></div>
              <div className="ml-[5px] leading-[18px] text-[#858c93]">Ocultar contenido fuera de la<br />página</div>
            </div>
          </div>
          <div className="h-[147px] shrink-0 border-b border-[#dcdee4] pl-[13px]">
            <div className="-ml-px mt-[8px] text-[12px] font-bold leading-[16px] text-[#3a4552]">Configuración de texto predete…</div>
            <div className="mt-[9px] flex gap-[6px]">
              <div className="flex h-[26px] w-[132px] items-center rounded-[4px] border border-[#c9cdd3] bg-white pl-[5px]">
                <span className="w-[104px] whitespace-nowrap text-[#858c93]">Familia de fuente</span>
                <span className="h-[14px] w-px bg-[#dfe2e6]" />
                <Caret w={7} h={5} color="#6d747c" className="ml-[6.500px]" />
              </div>
              <div className="flex h-[26px] w-[75px] items-center rounded-[4px] border border-[#c9cdd3] bg-white pl-[4px]">
                <span className="w-[49px] text-[10px] tracking-[0.150px] text-[#222]">Ninguno</span>
                <span className="h-[14px] w-px bg-[#dfe2e6]" />
                <Caret w={7} h={5} color="#6d747c" className="ml-[6.500px]" />
              </div>
            </div>
            <div className="mt-[7px] flex gap-[7px]">
              <div className="flex h-[26px] w-[103px] items-center rounded-[4px] border border-[#c9cdd3] bg-white pl-[6px]">
                <Svg w={11} h={12} stroke="#858c93" strokeWidth="1.500"><path d="M1 11.500L5.500 1 10 11.500M2.500 8h6" /></Svg>
                <div className="ml-[7px] flex h-[18px] w-[74px] items-center justify-center rounded-[2px] border border-[#c9cdd3] bg-[#f7f8fa] text-[9px] font-bold text-[#858c93]">?</div>
              </div>
              <div className="flex h-[26px] w-[103px] items-center rounded-[4px] border border-[#c9cdd3] bg-white pl-[6px]">
                <Svg w={13} h={11} stroke="#858c93"><path d="M0 5.500h5M2.500 5.500v4.500" strokeWidth="1.500" /><path d="M5.500 1.200h7.500M9.200 1v9.500M6 .8V3M12.500.8V3M7.700 10.200h3" strokeWidth="1.500" /></Svg>
                <span className="ml-[19px] mt-px w-[43px] text-[9px] tracking-[0.050px] text-[#b0b4ba]">PÍXELES</span>
                <span className="h-[14px] w-px bg-[#dfe2e6]" />
                <Caret w={7} h={5} color="#6d747c" className="ml-[7px]" />
              </div>
            </div>
            <div className="mt-[8px] w-[213px] text-center leading-[15px] text-[#1271f5]">Restablecer valores<br />predeterminados</div>
          </div>
          <div className="shrink-0 pl-[13px]">
            <div className="-ml-px mt-[8px] text-[12px] font-bold leading-[16px] text-[#3a4552]">Reemplazar colores</div>
            <div className="mt-[9px] flex h-[30px] w-[213px] items-center rounded-[6px] border border-[#dddfe6] bg-[#eaebf0] px-px">
              <div className="flex h-[26px] w-[103px] items-center justify-center rounded-[4px] bg-white text-[#1271f5] shadow-sm">Página actual</div>
              <div className="ml-[9px] text-[#858c93]">Proyecto co…</div>
            </div>
            <div className="mt-[15px] flex items-center whitespace-nowrap">
              <Check /><span className="ml-[5px] w-[51px]">Rellenos</span>
              <Check /><span className="ml-[4px] w-[63px]">Acciden…</span>
              <Check on /><span className="ml-[5px]">Color d…</span>
            </div>
            <div className="-mt-[3px]"><Swatches /></div>
            <div className="mt-[17px] h-[70px] w-[213px] rounded-[8px] bg-white px-[12px] pt-[9px] text-[12px] leading-[16px] tracking-[0.060px] text-[#858c93]">
              Haga clic en cualquier color de<br />arriba para reemplazarlo en la<br />página actual.
            </div>
          </div>
        </div>
        <div className="flex h-[10px] items-center bg-[#fbfbfc] pl-[2px]">
          <Arrow dir="left" />
          <div className="ml-[4px] h-[6px] w-[212px] rounded-full bg-[#8b8b8b]" />
          <div className="ml-[8px]"><Arrow dir="right" /></div>
        </div>
      </div>
      <div className="flex w-[9px] flex-col items-center bg-[#fbfbfc] pt-[3px]">
        <Arrow dir="up" />
        <div className="mt-[3px] h-[526px] w-[6px] rounded-full bg-[#8b8b8b]" />
        <div className="mt-[43px]"><Arrow dir="down" /></div>
      </div>
    </aside>
  );
}

/* ---------- Taskbar ---------- */

function ChromeLogo() {
  return (
    <Svg w={17} h={17} vb="0 0 34 34">
      <path d="M17 9H31.900A17 17 0 0 0 2.300 8.500L9.800 21z" fill="#e33b2e" />
      <path d="M10 21L2.300 8.500A17 17 0 0 0 17 34L24 21z" fill="#269b4a" />
      <path d="M24 21L17 34A17 17 0 0 0 31.900 9H17z" fill="#fbc116" />
      <circle cx="17" cy="17" r="8" fill="#fff" /><circle cx="17" cy="17" r="6.300" fill="#3b78e7" />
    </Svg>
  );
}

function TaskIcon({ className = "", children, line }) {
  return (
    <div className={`flex h-[30px] w-[37px] shrink-0 flex-col items-center ${className}`}>
      <div className="flex h-[28px] items-center">{children}</div>
      {line && <div className={`h-[2px] bg-[#6a68d4] ${line}`} />}
    </div>
  );
}

function Taskbar() {
  return (
    <footer className="flex h-[30px] shrink-0 items-center bg-[#d2d9d8] font-['Open_Sans','Noto_Sans',sans-serif] text-black">
      <Svg w={16} h={16} className="ml-[10px]"><path d="M0 2.500L6.500 1.500V7.500H0zM7.500 1.300L16 0V7.500H7.500zM0 8.500H6.500V14.500L0 13.500zM7.500 8.500H16V16L7.500 14.700z" fill="#000" /></Svg>
      <div className="ml-[10px] flex h-[30px] w-[257px] items-center border border-[#b9bebe] bg-white pl-[10px]">
        <Svg w={17} h={17} stroke="#111" strokeWidth="1.200"><circle cx="10.500" cy="6" r="5" /><path d="M7 9.600L1 15.700" /></Svg>
        <span className="ml-[12px] flex-1 text-[13.500px] text-[#222]">Buscar</span>
        <Svg w={60} h={28}>
          <defs>
            <linearGradient id="glow" x1="0" y1="0" x2="0" y2="1"><stop offset="0" stopColor="#c9b5f2" /><stop offset="1" stopColor="#ffd5a8" /></linearGradient>
            <linearGradient id="isle" x1="0" y1="0" x2="1" y2="0"><stop offset="0" stopColor="#8a4a78" /><stop offset=".25" stopColor="#f08c7e" /><stop offset=".7" stopColor="#e8938a" /><stop offset="1" stopColor="#8d5ab8" /></linearGradient>
          </defs>
          <ellipse cx="30" cy="21" rx="21" ry="15" fill="url(#glow)" opacity=".75" />
          <path d="M0 28c0-4 4-8 12-8h36c8 0 12 4 12 8z" fill="url(#isle)" />
          <path d="M0 27l2-6 2-5 1-1 1 4 2-3 2 3 13 1 12-1 8-2 2-4 2 2 2-4 2 4 2 1 2 5 3 6-6-4c-4-2-12 0-18-1s-14 0-20-1c-6 0-10 2-14 6z" fill="#5a2b45" />
          <path d="M27 19l4-18 3 11 2 7z" fill="#3f86d2" /><path d="M31 1l-1 18h-3z" fill="#8cc4f5" />
          <path d="M8 27c2-2 5-2 7-1M24 25c3 1 6 1 9-1" stroke="#7d3a75" strokeWidth="1" />
        </Svg>
      </div>
      <TaskIcon><Svg w={16} h={16}><circle cx="8" cy="8" r="6.800" stroke="#000" strokeWidth="2" /></Svg></TaskIcon>
      <TaskIcon><Svg w={17} h={16} stroke="#000" strokeWidth="1.200"><path d="M1 1v2.500h10V1M1.500 6h9.500v5H1.500zM1 15.500V13h10v2.500M14.500 0v3M14.500 8v8" /><path d="M13 4h3v3h-3z" fill="#000" stroke="none" /></Svg></TaskIcon>
      <TaskIcon className="ml-[1px]">
        <Svg w={17} h={16}>
          <defs><linearGradient id="cpa" x1="0" y1="0" x2="0" y2="1"><stop offset="0" stopColor="#1f8fe8" /><stop offset=".5" stopColor="#2fb594" /><stop offset="1" stopColor="#f4c21d" /></linearGradient><linearGradient id="cpb" x1="0" y1="0" x2="0" y2="1"><stop offset="0" stopColor="#a04be0" /><stop offset=".5" stopColor="#ef4f8f" /><stop offset="1" stopColor="#f98a3c" /></linearGradient></defs>
          <path d="M5 .5h6.500c-1.500 0-2 1-2.500 2.500L7 11c-.3 1-1 1.500-2 1.500H2.500C.5 12.500-.2 11 .3 9L2 3C2.500 1.500 3.500.5 5 .5z" fill="url(#cpa)" />
          <path d="M12 15.500H6c1.500 0 2-1 2.400-2.500l2-8c.3-1 1-1.500 2-1.500h2c2 0 2.700 1.500 2.200 3.500L15 13c-.5 1.500-1.500 2.500-3 2.500z" fill="url(#cpb)" />
          <path d="M8.500.5h3c1 0 1.600.7 2 1.800l.4 1.300h-2c-1 0-1.700.5-2 1.500z" fill="#1c4fc0" />
        </Svg>
      </TaskIcon>
      <TaskIcon><Svg w={16} h={15}><path d="M0 2A1 1 0 0 1 1 1h5l1.500 2H16v11H0z" fill="#e3a21a" /><rect y="4" width="16" height="10" rx=".6" fill="#ffd257" /><path d="M3 14V9.500A1.500 1.500 0 0 1 4.500 8h7A1.500 1.500 0 0 1 13 9.500V14h-3v-3H6v3z" fill="#2f86d1" /></Svg></TaskIcon>
      <TaskIcon><Svg w={17} h={17}><ellipse cx="8" cy="6" rx="7.200" ry="4.500" transform="rotate(-15 8 6)" fill="#fff" stroke="#d9434a" strokeWidth="1.200" /><path d="M4 9L13 4M6 3l5 7" stroke="#8b8f94" strokeWidth=".9" /><path d="M9 10l5 3M13 9l-3 5" stroke="#3385d6" strokeWidth="1.200" /><circle cx="14.500" cy="12.500" r="1.600" stroke="#3385d6" /><circle cx="10.500" cy="15" r="1.500" stroke="#3385d6" /></Svg></TaskIcon>
      <TaskIcon>
        <Svg w={17} h={17}><defs><linearGradient id="cv" x1="0" y1="0" x2="1" y2="1"><stop offset="0" stopColor="#06c4cc" /><stop offset=".55" stopColor="#4470e0" /><stop offset="1" stopColor="#7d2ae8" /></linearGradient></defs><circle cx="8.500" cy="8.500" r="8.300" fill="url(#cv)" /><path d="M11 6.500c.5-1.500-.2-2.500-1.500-2.500-2.300 0-4 2.500-4 5 0 2.300 1.200 3.500 2.800 3.500 1.400 0 2.500-.8 3.200-2.200" stroke="#fff" strokeWidth="1.400" strokeLinecap="round" /></Svg>
      </TaskIcon>
      <TaskIcon line="w-[28px]">
        <Svg w={17} h={17}><defs><linearGradient id="ed" x1="0" y1="0" x2="1" y2="0"><stop offset="0" stopColor="#2aa7de" /><stop offset="1" stopColor="#66d64c" /></linearGradient></defs><circle cx="8.500" cy="8.500" r="8.300" fill="#1573c9" /><path d="M.3 8C1 3.200 4.500.3 8.700.3c4.800 0 8 3.200 8 6.500 0 2.700-2 4.200-4.300 4.200-1.800 0-2.800-.8-2.300-1.500.9-1.400.2-4.300-3.200-4.300C4 5.200 1.500 6.500.3 8z" fill="url(#ed)" /><path d="M7 7.500c-2 1.500-2 5.500 1.500 7.200 2.500 1.200 5.500.5 7-1-3 3.500-8.500 4-11.500 1C1.500 12 3 8.200 7 7.500z" fill="#0c4f9c" /><path d="M10 9.500c-1 1.500.5 2.500 3 2.300 1.500-.1 2.500-.5 3-1l.3 1.200-1.300 2c-4 1-7-.5-7-3z" fill="#d2d9d8" /></Svg>
      </TaskIcon>
      <TaskIcon><ChromeLogo /></TaskIcon>
      <TaskIcon className="border-r-2 border-[#c4cac9] bg-[#ebefee]" line="w-[35px]">
        <div className="relative ml-[2px]">
          <ChromeLogo />
          <div className="absolute left-[8px] top-[8px] flex h-[9px] w-[9px] items-center justify-center rounded-full bg-[#6c9a53] text-[6px] leading-none text-white">S</div>
        </div>
      </TaskIcon>
      <TaskIcon line="w-[28px]">
        <Svg w={17} h={17}><path d="M12 .5l4.500 2v12l-4.500 2-7-6.600L1.800 12.300.3 11.500v-6l1.500-.8L5 7.100z" fill="#1077bd" /><path d="M12 5L7.500 8.500 12 12z" fill="#d2d9d8" /><path d="M12 .5l4.500 2v12l-4.500 2z" fill="#23a4ee" /><path d="M1.800 7v3l1.500-1.500z" fill="#d2d9d8" /></Svg>
      </TaskIcon>
      <div className="flex-1" />
      <Svg w={24} h={16}><defs><linearGradient id="cl" x1="0" y1="0" x2="0" y2="1"><stop offset="0" stopColor="#a9cbf8" /><stop offset="1" stopColor="#5c8fe6" /></linearGradient></defs><path d="M5.500 15.500a5 5 0 0 1-.5-9.800A7 7 0 0 1 18 5.500a5 5 0 0 1 .5 10z" fill="url(#cl)" /></Svg>
      <span className="ml-[8px] w-[38px] whitespace-nowrap text-[13px]">18°C</span>
      <span className="w-[72px] text-[13px] tracking-[0.150px]">Nublado</span>
      <Svg w={12} h={8} stroke="#111" strokeWidth="1.200"><path d="M.7 6.800L6 1.500l5.300 5.300" /></Svg>
      <Svg w={12} h={16} className="ml-[12px]" stroke="#111" strokeWidth="1.200"><rect x="1" y="4.500" width="7" height="7" rx="1.500" /><path d="M8 7l3-1.500v5L8 9M2 2c2-1.500 5-1.500 7 0M2 14c2 1.500 5 1.500 7 0" /></Svg>
      <Svg w={16} h={10} className="ml-[12px]" stroke="#111" strokeWidth="1.200"><rect x=".8" y=".8" width="12.400" height="8" /><path d="M14.800 3v4" /><rect x="2.500" y="2.500" width="5" height="4.600" fill="#111" stroke="none" /></Svg>
      <Svg w={17} h={14} className="ml-[7px]" stroke="#111" strokeWidth="1.100"><path d="M1 5h2.500L7 1.500v11L3.500 9H1zM9 5c1 1.200 1 2.800 0 4M11.500 3.300c2 2.300 2 5 0 7.400M14 1.800c2.600 3.200 2.600 7.200 0 10.400" /></Svg>
      <span className="ml-[11px] w-[34px] text-[10.500px]">ESP</span>
      <span className="w-[44px] text-[11px] tracking-[-0.200px]">21:42</span>
      <Svg w={17} h={16} stroke="#111" strokeWidth="1.200"><path d="M1 1h15v11h-4.500v3l-3.500-3H1z" /></Svg>
      <div className="ml-[19px] mr-[4px] h-[30px] w-px bg-[#9da3a2]" />
    </footer>
  );
}

export default function App() {
  return (
    <div className="flex h-[768px] w-[1366px] flex-col overflow-hidden bg-white font-['Liberation_Sans',Arial,sans-serif]">
      <TabBar />
      <AddressBar />
      <Header />
      <div className="flex h-[601px] shrink-0">
        <Rail />
        <PagesPanel />
        <Workspace />
        <FormatPanel />
      </div>
      <Taskbar />
    </div>
  );
}
